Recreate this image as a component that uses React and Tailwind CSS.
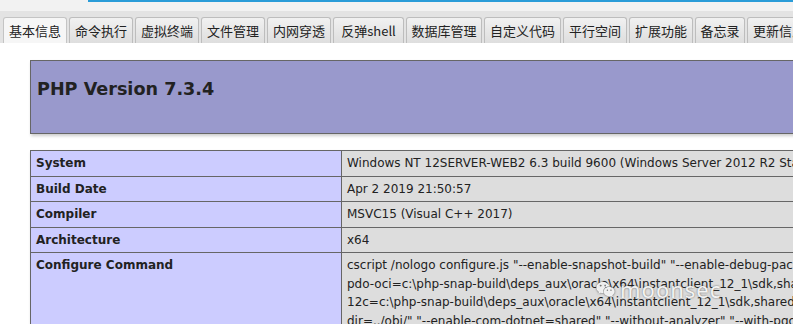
import React from "react";
import { FaWeixin } from "react-icons/fa";

const tabs = [
  { label: "基本信息", w: "w-[64px]", active: true },
  { label: "命令执行", w: "w-[64px]" },
  { label: "虚拟终端", w: "w-[64px]" },
  { label: "文件管理", w: "w-[64px]" },
  { label: "内网穿透", w: "w-[64px]" },
  { label: "反弹shell", w: "w-[71px]" },
  { label: "数据库管理", w: "w-[76px]" },
  { label: "自定义代码", w: "w-[77px]" },
  { label: "平行空间", w: "w-[64px]" },
  { label: "扩展功能", w: "w-[64px]" },
  { label: "备忘录", w: "w-[50px]" },
  { label: "更新信息", w: "w-[64px]" },
];

// configure command, broken where the original page wraps it
const configureLines = [
  'cscript /nologo configure.js "--enable-snapshot-build" "--enable-debug-pack" "--with-',
  'pdo-oci=c:\\php-snap-build\\deps_aux\\oracle\\x64\\instantclient_12_1\\sdk,shared" "--with-oci8-',
  '12c=c:\\php-snap-build\\deps_aux\\oracle\\x64\\instantclient_12_1\\sdk,shared" "--enable-object-out-',
  'dir=../obj/" "--enable-com-dotnet=shared" "--without-analyzer" "--with-pgo"',
];

const rows = [
  ["System", "Windows NT 12SERVER-WEB2 6.3 build 9600 (Windows Server 2012 R2 Standard Edition) AMD64"],
  ["Build Date", "Apr 2 2019 21:50:57"],
  ["Compiler", "MSVC15 (Visual C++ 2017)"],
  ["Architecture", "x64"],
  [
    "Configure Command",
    configureLines.map((l, i) => (
      <React.Fragment key={i}>
        {l}
        {i < configureLines.length - 1 && <br />}
      </React.Fragment>
    )),
  ],
];

const Tab = ({ label, w, active }) => (
  <div
    className={`${w} shrink-0 h-[26px] flex items-center justify-center rounded-t-[3px] border border-b-0 text-[13px] text-[#222] ${
      active
        ? "bg-[#f6f6f6] border-[#c4c4c4]"
        : "bg-gradient-to-b from-[#f1f1f1] to-[#dedede] border-[#bdbdbd]"
    }`}
  >
    {label}
  </div>
);

export default function App() {
  return (
    <div className="w-[793px] h-[324px] overflow-hidden bg-white relative">
      {/* address field edge + tab strip */}
      <div className="h-[11px] bg-[#f2f2f2]">
        <div className="ml-[88px] h-[2px] bg-[#2a9cd8]" />
      </div>
      <div
        className="h-[32px] bg-[#e3e3e3] pt-[6px] px-[3px] flex gap-[2px] items-end"
        style={{ fontFamily: '"Noto Sans CJK SC", "Noto Sans", sans-serif' }}
      >
        {tabs.map((t) => (
          <Tab key={t.label} {...t} />
        ))}
      </div>

      {/* phpinfo page */}
      <div
        className="pl-[30px] pt-[17px] text-[#222]"
        style={{ fontFamily: '"DejaVu Sans", "Liberation Sans", sans-serif' }}
      >
        <div className="w-[934px] h-[74px] border border-[#666] bg-[#9999cc] shadow-[1px_2px_3px_#ccc] pl-[6px] pt-[16px]">
          <h1 className="text-[17.6px] leading-[24px] font-bold">PHP Version 7.3.4</h1>
        </div>

        <table className="mt-[16px] w-[934px] border-collapse shadow-[1px_2px_3px_#ccc] text-[12px]">
          <tbody>
            {rows.map(([k, v]) => (
              <tr key={k}>
                <td className="w-[311px] border border-[#666] bg-[#ccccff] font-bold px-[5px] py-[3px] leading-[18px] align-baseline">
                  {k}
                </td>
                <td className="border border-[#666] bg-[#dddddd] px-[5px] py-[3px] leading-[18.5px] align-baseline whitespace-nowrap">
                  {v}
                </td>
              </tr>
            ))}
          </tbody>
        </table>
      </div>

      {/* watermark */}
      <div className="absolute left-[596px] top-[277px] flex items-center gap-[5px] text-white/90 pointer-events-none [text-shadow:0_0_2px_rgba(60,60,60,0.8)]">
        <FaWeixin className="w-[19px] h-[19px] drop-shadow-[0_0_1px_rgba(60,60,60,0.9)]" />
        <span className="text-[22px] leading-[24px] tracking-[1px]" style={{ fontFamily: '"Noto Sans", sans-serif' }}>
          moonsec
        </span>
      </div>
    </div>
  );
}
